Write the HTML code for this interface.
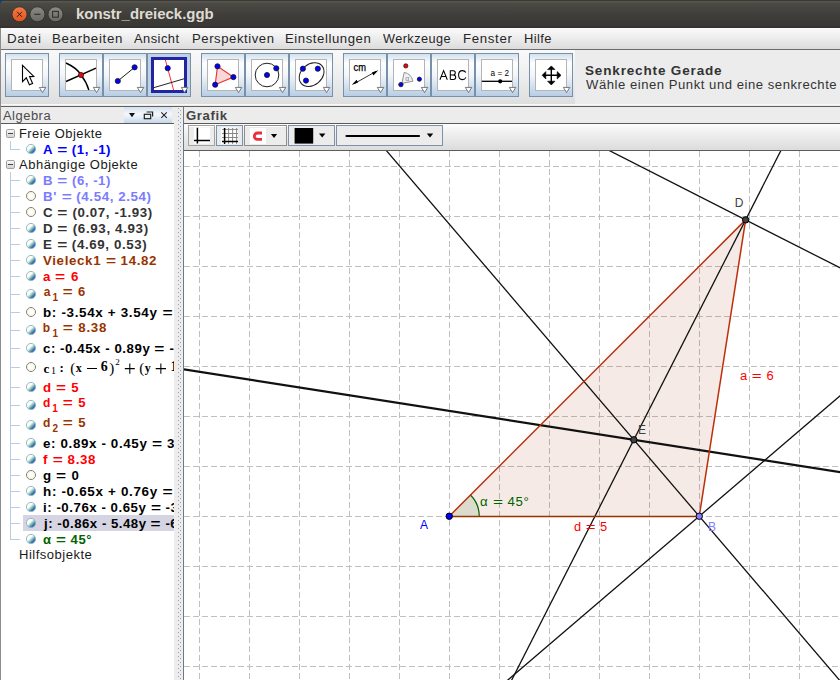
<!DOCTYPE html>
<html><head><meta charset="utf-8">
<style>
*{margin:0;padding:0;box-sizing:border-box}
html,body{width:840px;height:680px;overflow:hidden;background:#ececec;font-family:"Liberation Sans",sans-serif}
.a{position:absolute}
.t{position:absolute;white-space:nowrap;line-height:1}
</style></head><body>
<div class="a" style="left:0;top:0;width:12px;height:12px;background:#1b3868"></div>
<div class="a" style="left:0;top:0;width:840px;height:28px;background:linear-gradient(#3a3935 0,#3a3935 1px,#57564f 1px,#57564f 2px,#4b4a45 3px,#3d3c38 60%,#393834);border-radius:5px 0 0 0"></div>
<div class="a" style="left:0;top:26px;width:840px;height:2px;background:#34332f"></div>
<svg class="a" style="left:0;top:0" width="70" height="28">
<defs>
<linearGradient id="gc" x1="0" y1="0" x2="0" y2="1"><stop offset="0" stop-color="#f27a4a"/><stop offset="1" stop-color="#e2541c"/></linearGradient>
<linearGradient id="gg" x1="0" y1="0" x2="0" y2="1"><stop offset="0" stop-color="#8c8a85"/><stop offset="1" stop-color="#6a6863"/></linearGradient>
</defs>
<circle cx="19.5" cy="14.3" r="7.5" fill="url(#gc)" stroke="#2e2d29" stroke-width="0.8"/>
<path d="M17 11.8 L22 16.8 M22 11.8 L17 16.8" stroke="#3a1a0c" stroke-width="1"/>
<circle cx="37.4" cy="14.3" r="7.5" fill="url(#gg)" stroke="#2e2d29" stroke-width="0.8"/>
<path d="M34.3 14.3 H40.5" stroke="#33322e" stroke-width="1.2"/>
<circle cx="55.5" cy="14.3" r="7.5" fill="url(#gg)" stroke="#2e2d29" stroke-width="0.8"/>
<rect x="52.6" y="11.4" width="5.8" height="5.8" fill="none" stroke="#33322e" stroke-width="1.1"/>
</svg>
<div class="t" style="left:75.80px;top:6.05px;font-size:15px;font-weight:bold;color:#dfdbd2;letter-spacing:-0.021px;font-family:'Liberation Sans',sans-serif;transform:scaleX(0.9974);transform-origin:0 0;">konstr_dreieck.ggb</div>
<div class="a" style="left:0;top:28px;width:840px;height:21px;background:linear-gradient(#fbfbfb,#e9e9e9 60%,#dcdcdc)"></div>
<div class="a" style="left:0;top:49px;width:840px;height:1px;background:#6d6d6d"></div>
<div class="t" style="left:7.49px;top:32.84px;font-size:12px;font-weight:normal;color:#262626;letter-spacing:0.643px;font-family:'Liberation Sans',sans-serif;transform:scaleX(1.1088);transform-origin:0 0;">Datei</div>
<div class="t" style="left:52.19px;top:32.84px;font-size:12px;font-weight:normal;color:#262626;letter-spacing:0.607px;font-family:'Liberation Sans',sans-serif;transform:scaleX(1.1075);transform-origin:0 0;">Bearbeiten</div>
<div class="t" style="left:134.30px;top:32.84px;font-size:12px;font-weight:normal;color:#262626;letter-spacing:0.443px;font-family:'Liberation Sans',sans-serif;transform:scaleX(1.0725);transform-origin:0 0;">Ansicht</div>
<div class="t" style="left:192.21px;top:32.84px;font-size:12px;font-weight:normal;color:#262626;letter-spacing:0.516px;font-family:'Liberation Sans',sans-serif;transform:scaleX(1.0917);transform-origin:0 0;">Perspektiven</div>
<div class="t" style="left:285.10px;top:32.84px;font-size:12px;font-weight:normal;color:#262626;letter-spacing:0.517px;font-family:'Liberation Sans',sans-serif;transform:scaleX(1.0967);transform-origin:0 0;">Einstellungen</div>
<div class="t" style="left:383.20px;top:32.84px;font-size:12px;font-weight:normal;color:#262626;letter-spacing:0.413px;font-family:'Liberation Sans',sans-serif;transform:scaleX(1.0583);transform-origin:0 0;">Werkzeuge</div>
<div class="t" style="left:462.90px;top:32.84px;font-size:12px;font-weight:normal;color:#262626;letter-spacing:0.612px;font-family:'Liberation Sans',sans-serif;transform:scaleX(1.1025);transform-origin:0 0;">Fenster</div>
<div class="t" style="left:524.32px;top:32.84px;font-size:12px;font-weight:normal;color:#262626;letter-spacing:0.395px;font-family:'Liberation Sans',sans-serif;transform:scaleX(1.0756);transform-origin:0 0;">Hilfe</div>
<div class="a" style="left:0;top:50px;width:840px;height:56px;background:#ececec"></div>
<div class="a" style="left:1px;top:50px;width:574px;height:54px;background:linear-gradient(#f9f9f9,#f3f3f3 30%,#dedede)"></div>
<div class="a" style="left:0;top:104px;width:840px;height:1px;background:#f8f8f8"></div>
<div class="a" style="left:0;top:106px;width:840px;height:1px;background:#606060"></div>
<svg class="a" style="left:0;top:53px" width="580" height="44"><defs><linearGradient id="bg" x1="0" y1="0" x2="0" y2="1">
<stop offset="0" stop-color="#cfdeec"/><stop offset="0.22" stop-color="#fdfeff"/><stop offset="0.5" stop-color="#f2f6fa"/><stop offset="1" stop-color="#b6cde4"/></linearGradient></defs><g transform="translate(5,0)"><rect x="0.5" y="0.5" width="43" height="43" fill="url(#bg)" stroke="#7890a8" stroke-width="1"/><rect x="6.5" y="6.5" width="31" height="31" fill="#fff" stroke="#b4b4b4" stroke-width="1"/><path d="M17.5 12.3 L17.5 28.6 L21.3 24.8 L24.4 31.8 L27.6 30.5 L24.6 23.6 L28.8 23.4 Z" fill="#fff" stroke="#000" stroke-width="1.1" stroke-linejoin="miter"/><path d="M34.3 34.4 L40.8 34.4 L37.55 39.6 Z" fill="#fff" stroke="#6a6a6a" stroke-width="0.9" stroke-linejoin="miter"/></g><g transform="translate(59,0)"><rect x="0.5" y="0.5" width="43" height="43" fill="url(#bg)" stroke="#7890a8" stroke-width="1"/><rect x="6.5" y="6.5" width="31" height="31" fill="#fff" stroke="#b4b4b4" stroke-width="1"/><path d="M7 10 Q18 15 22 22 Q27.5 29 29.8 37" fill="none" stroke="#000" stroke-width="1.4"/><path d="M7 28.5 L37 15.2" fill="none" stroke="#000" stroke-width="1.4"/><circle cx="22" cy="22" r="2.6" fill="#ff0000" stroke="#1a1a1a" stroke-width="0.8"/><path d="M34.3 34.4 L40.8 34.4 L37.55 39.6 Z" fill="#fff" stroke="#6a6a6a" stroke-width="0.9" stroke-linejoin="miter"/></g><g transform="translate(103,0)"><rect x="0.5" y="0.5" width="43" height="43" fill="url(#bg)" stroke="#7890a8" stroke-width="1"/><rect x="6.5" y="6.5" width="31" height="31" fill="#fff" stroke="#b4b4b4" stroke-width="1"/><path d="M14.8 28 L31.6 14.3" stroke="#000" stroke-width="0.9"/><circle cx="14.8" cy="28" r="2.6" fill="#0000ff" stroke="#1a1a1a" stroke-width="0.8"/><circle cx="31.6" cy="14.3" r="2.6" fill="#0000ff" stroke="#1a1a1a" stroke-width="0.8"/><path d="M34.3 34.4 L40.8 34.4 L37.55 39.6 Z" fill="#fff" stroke="#6a6a6a" stroke-width="0.9" stroke-linejoin="miter"/></g><g transform="translate(147,0)"><rect x="0.5" y="0.5" width="43" height="43" fill="#bcd3e9" stroke="#7f8fa0" stroke-width="1"/><rect x="5.5" y="5.5" width="33" height="33" fill="#fff" stroke="#2424a0" stroke-width="3"/><path d="M18.4 7 L26.6 37" stroke="#ff3030" stroke-width="1"/><path d="M7 34.6 L37 25.8" stroke="#222" stroke-width="1"/><circle cx="20.7" cy="15.2" r="2.6" fill="#0000ff" stroke="#1a1a1a" stroke-width="0.8"/><path d="M34.3 34.4 L40.8 34.4 L37.55 39.6 Z" fill="#fff" stroke="#6a6a6a" stroke-width="0.9" stroke-linejoin="miter"/></g><g transform="translate(201,0)"><rect x="0.5" y="0.5" width="43" height="43" fill="url(#bg)" stroke="#7890a8" stroke-width="1"/><rect x="6.5" y="6.5" width="31" height="31" fill="#fff" stroke="#b4b4b4" stroke-width="1"/><path d="M16.5 13.3 L32.4 24.1 L14.2 31.7 Z" fill="#f8d8d8" stroke="#e83030" stroke-width="1.1"/><circle cx="16.5" cy="13.3" r="2.6" fill="#0000ff" stroke="#1a1a1a" stroke-width="0.8"/><circle cx="32.4" cy="24.1" r="2.6" fill="#0000ff" stroke="#1a1a1a" stroke-width="0.8"/><circle cx="14.2" cy="31.7" r="2.6" fill="#0000ff" stroke="#1a1a1a" stroke-width="0.8"/><path d="M34.3 34.4 L40.8 34.4 L37.55 39.6 Z" fill="#fff" stroke="#6a6a6a" stroke-width="0.9" stroke-linejoin="miter"/></g><g transform="translate(245,0)"><rect x="0.5" y="0.5" width="43" height="43" fill="url(#bg)" stroke="#7890a8" stroke-width="1"/><rect x="6.5" y="6.5" width="31" height="31" fill="#fff" stroke="#b4b4b4" stroke-width="1"/><circle cx="22" cy="22" r="11.8" fill="none" stroke="#222" stroke-width="1"/><circle cx="22" cy="22" r="2.6" fill="#0000ff" stroke="#1a1a1a" stroke-width="0.8"/><circle cx="31.3" cy="15.3" r="2.6" fill="#0000ff" stroke="#1a1a1a" stroke-width="0.8"/><path d="M34.3 34.4 L40.8 34.4 L37.55 39.6 Z" fill="#fff" stroke="#6a6a6a" stroke-width="0.9" stroke-linejoin="miter"/></g><g transform="translate(289,0)"><rect x="0.5" y="0.5" width="43" height="43" fill="url(#bg)" stroke="#7890a8" stroke-width="1"/><rect x="6.5" y="6.5" width="31" height="31" fill="#fff" stroke="#b4b4b4" stroke-width="1"/><ellipse cx="22.6" cy="21.6" rx="13.6" ry="10.4" transform="rotate(-40 22.6 21.6)" fill="none" stroke="#222" stroke-width="1"/><circle cx="13.9" cy="15.7" r="2.6" fill="#0000ff" stroke="#1a1a1a" stroke-width="0.8"/><circle cx="28.8" cy="15.7" r="2.6" fill="#0000ff" stroke="#1a1a1a" stroke-width="0.8"/><circle cx="17" cy="27.6" r="2.6" fill="#0000ff" stroke="#1a1a1a" stroke-width="0.8"/><path d="M34.3 34.4 L40.8 34.4 L37.55 39.6 Z" fill="#fff" stroke="#6a6a6a" stroke-width="0.9" stroke-linejoin="miter"/></g><g transform="translate(343,0)"><rect x="0.5" y="0.5" width="43" height="43" fill="url(#bg)" stroke="#7890a8" stroke-width="1"/><rect x="6.5" y="6.5" width="31" height="31" fill="#fff" stroke="#b4b4b4" stroke-width="1"/><text x="10.6" y="17.9" font-family="Liberation Sans" font-size="10" fill="#000" stroke="#000" stroke-width="0.25" textLength="12.4" lengthAdjust="spacingAndGlyphs">cm</text><path d="M11 30.8 L33 18.4" stroke="#000" stroke-width="0.8"/><path d="M8.7 32 L13.6 26.8 L15.1 29.6 Z M35.3 17.2 L30.4 22.4 L28.9 19.6 Z" fill="#000"/><path d="M34.3 34.4 L40.8 34.4 L37.55 39.6 Z" fill="#fff" stroke="#6a6a6a" stroke-width="0.9" stroke-linejoin="miter"/></g><g transform="translate(387,0)"><rect x="0.5" y="0.5" width="43" height="43" fill="url(#bg)" stroke="#7890a8" stroke-width="1"/><rect x="6.5" y="6.5" width="31" height="31" fill="#fff" stroke="#b4b4b4" stroke-width="1"/><path d="M14.9 30.4 L17.2 19.4 A11 11 0 0 1 25.9 28.2 Z" fill="#f0f0f0" stroke="#888" stroke-width="0.9"/><text x="18.2" y="27.6" font-family="Liberation Sans" font-size="7" fill="#888">α</text><circle cx="18.8" cy="12.9" r="2.1" fill="#ff0000" stroke="#1a1a1a" stroke-width="0.8"/><circle cx="13.9" cy="31.6" r="2.2" fill="#0000ff" stroke="#1a1a1a" stroke-width="0.8"/><circle cx="32.4" cy="26.2" r="2.1" fill="#0000ff" stroke="#1a1a1a" stroke-width="0.8"/><path d="M34.3 34.4 L40.8 34.4 L37.55 39.6 Z" fill="#fff" stroke="#6a6a6a" stroke-width="0.9" stroke-linejoin="miter"/></g><g transform="translate(431,0)"><rect x="0.5" y="0.5" width="43" height="43" fill="url(#bg)" stroke="#7890a8" stroke-width="1"/><rect x="6.5" y="6.5" width="31" height="31" fill="#fff" stroke="#b4b4b4" stroke-width="1"/><path d="M8.9 26.7 L12.6 17.6 L16.3 26.7 M10.3 23.4 H14.9" fill="none" stroke="#000" stroke-width="1.05"/><path d="M19.3 26.4 V17.7 H22.4 Q24.3 17.7 24.3 19.8 Q24.3 21.9 22.2 21.9 H19.3 M22.2 21.9 Q24.7 21.9 24.7 24.2 Q24.7 26.4 22.4 26.4 H19.3" fill="none" stroke="#000" stroke-width="1.05"/><path d="M34.8 19.6 Q33.8 17.6 31.4 17.6 Q27.6 17.6 27.6 22.1 Q27.6 26.6 31.4 26.6 Q33.9 26.6 34.9 24.4" fill="none" stroke="#000" stroke-width="1.05"/><path d="M34.3 34.4 L40.8 34.4 L37.55 39.6 Z" fill="#fff" stroke="#6a6a6a" stroke-width="0.9" stroke-linejoin="miter"/></g><g transform="translate(475,0)"><rect x="0.5" y="0.5" width="43" height="43" fill="url(#bg)" stroke="#7890a8" stroke-width="1"/><rect x="6.5" y="6.5" width="31" height="31" fill="#fff" stroke="#b4b4b4" stroke-width="1"/><text x="15.6" y="22.7" font-family="Liberation Sans" font-size="8.5" fill="#000" textLength="18.4" lengthAdjust="spacingAndGlyphs">a = 2</text><path d="M6.8 28.3 H37" stroke="#000" stroke-width="1.3"/><circle cx="25.2" cy="28.3" r="2.1" fill="#000"/><path d="M34.3 34.4 L40.8 34.4 L37.55 39.6 Z" fill="#fff" stroke="#6a6a6a" stroke-width="0.9" stroke-linejoin="miter"/></g><g transform="translate(529,0)"><rect x="0.5" y="0.5" width="43" height="43" fill="url(#bg)" stroke="#7890a8" stroke-width="1"/><rect x="6.5" y="6.5" width="31" height="31" fill="#fff" stroke="#b4b4b4" stroke-width="1"/><path d="M22.3 15 V29.6 M15.6 22.3 H29" stroke="#000" stroke-width="1.4"/><path d="M22.3 12.9 L26 16.6 L18.6 16.6 Z M22.3 32 L26 28.2 L18.6 28.2 Z M13.1 22.3 L16.8 18.6 L16.8 26 Z M32 22.3 L28.2 18.6 L28.2 26 Z" fill="#000" stroke="#000" stroke-width="0.6" stroke-linejoin="miter"/><path d="M34.3 34.4 L40.8 34.4 L37.55 39.6 Z" fill="#fff" stroke="#6a6a6a" stroke-width="0.9" stroke-linejoin="miter"/></g></svg>
<div class="t" style="left:585.26px;top:64.64px;font-size:12px;font-weight:bold;color:#333;letter-spacing:0.753px;font-family:'Liberation Sans',sans-serif;transform:scaleX(1.1247);transform-origin:0 0;">Senkrechte Gerade</div>
<div class="t" style="left:585.60px;top:79.44px;font-size:12px;font-weight:normal;color:#333;letter-spacing:0.489px;font-family:'Liberation Sans',sans-serif;transform:scaleX(1.0907);transform-origin:0 0;">Wähle einen Punkt und eine senkrechte Gerade</div>
<div class="a" style="left:0;top:28px;width:1px;height:652px;background:#8c8c8c"></div>
<div class="a" style="left:1px;top:107px;width:173px;height:16px;background:#ececec"></div>
<div class="a" style="left:124px;top:107px;width:48px;height:16px;background:linear-gradient(#d3e0ee,#f4f8fb 45%,#e9f0f7 60%,#c3d6ea)"></div>
<div class="a" style="left:1px;top:123px;width:173px;height:1px;background:#5a5a5a"></div>
<svg class="a" style="left:124px;top:107px" width="48" height="16">
<path d="M5 6 H11 L8 10.2 Z" fill="#111"/>
<rect x="20.3" y="7.3" width="6.4" height="4.4" fill="none" stroke="#222" stroke-width="1.2"/>
<path d="M22.6 5 H28.6 V9.6" fill="none" stroke="#222" stroke-width="1.2"/>
<path d="M37.3 5.3 L42.8 10.8 M42.8 5.3 L37.3 10.8" stroke="#222" stroke-width="1.1"/>
</svg>
<div class="t" style="left:3.00px;top:109.84px;font-size:12px;font-weight:normal;color:#4a4a4a;letter-spacing:0.481px;font-family:'Liberation Sans',sans-serif;transform:scaleX(1.0749);transform-origin:0 0;">Algebra</div>
<div class="a" style="left:1px;top:124px;width:173px;height:556px;background:#fff;overflow:hidden"><div class="a" style="left:-1px;top:-124px;width:840px;height:680px"><svg class="a" style="left:0;top:124px" width="174" height="556"><defs><linearGradient id="mg" x1="0" y1="0" x2="0" y2="1"><stop offset="0" stop-color="#fafafa"/><stop offset="1" stop-color="#d0d0d0"/></linearGradient><linearGradient id="ball" x1="0.15" y1="0.15" x2="0.85" y2="0.85"><stop offset="0" stop-color="#ffffff"/><stop offset="0.36" stop-color="#fbfdf6"/><stop offset="0.46" stop-color="#cfe6c4"/><stop offset="0.6" stop-color="#94bcc0"/><stop offset="0.75" stop-color="#4a8cbf"/><stop offset="1" stop-color="#23508a"/></linearGradient></defs><rect x="10" y="17" width="1" height="8" fill="#b8cce4"/><rect x="10" y="25" width="10" height="1" fill="#b8cce4"/><rect x="6.5" y="5.5" width="8" height="8" rx="1.2" fill="url(#mg)" stroke="#a0a0a0" stroke-width="1"/><rect x="8" y="9" width="5" height="1" fill="#444"/><rect x="6.5" y="36.5" width="8" height="8" rx="1.2" fill="url(#mg)" stroke="#a0a0a0" stroke-width="1"/><rect x="8" y="40" width="5" height="1" fill="#444"/><rect x="23" y="391" width="151" height="16" fill="#d4d4e2"/><rect x="10" y="48" width="1" height="367" fill="#b8cce4"/><circle cx="31" cy="25" r="4.6" fill="url(#ball)" stroke="#86b2c8" stroke-width="0.9"/><rect x="10" y="56" width="10" height="1" fill="#b8cce4"/><circle cx="31" cy="56" r="4.6" fill="url(#ball)" stroke="#86b2c8" stroke-width="0.9"/><rect x="10" y="72" width="10" height="1" fill="#b8cce4"/><circle cx="31" cy="72" r="4.5" fill="#fff" stroke="#7c7c7c" stroke-width="1"/><circle cx="31" cy="72" r="3.5" fill="none" stroke="#f2f2cc" stroke-width="1"/><rect x="10" y="88" width="10" height="1" fill="#b8cce4"/><circle cx="31" cy="88" r="4.5" fill="#fff" stroke="#7c7c7c" stroke-width="1"/><circle cx="31" cy="88" r="3.5" fill="none" stroke="#f2f2cc" stroke-width="1"/><rect x="10" y="104" width="10" height="1" fill="#b8cce4"/><circle cx="31" cy="104" r="4.6" fill="url(#ball)" stroke="#86b2c8" stroke-width="0.9"/><rect x="10" y="120" width="10" height="1" fill="#b8cce4"/><circle cx="31" cy="120" r="4.6" fill="url(#ball)" stroke="#86b2c8" stroke-width="0.9"/><rect x="10" y="136" width="10" height="1" fill="#b8cce4"/><circle cx="31" cy="136" r="4.6" fill="url(#ball)" stroke="#86b2c8" stroke-width="0.9"/><rect x="10" y="152" width="10" height="1" fill="#b8cce4"/><circle cx="31" cy="152" r="4.6" fill="url(#ball)" stroke="#86b2c8" stroke-width="0.9"/><rect x="10" y="170" width="10" height="1" fill="#b8cce4"/><circle cx="31" cy="170" r="4.6" fill="url(#ball)" stroke="#86b2c8" stroke-width="0.9"/><rect x="10" y="188" width="10" height="1" fill="#b8cce4"/><circle cx="31" cy="188" r="4.5" fill="#fff" stroke="#7c7c7c" stroke-width="1"/><circle cx="31" cy="188" r="3.5" fill="none" stroke="#f2f2cc" stroke-width="1"/><rect x="10" y="206" width="10" height="1" fill="#b8cce4"/><circle cx="31" cy="206" r="4.6" fill="url(#ball)" stroke="#86b2c8" stroke-width="0.9"/><rect x="10" y="224" width="10" height="1" fill="#b8cce4"/><circle cx="31" cy="224" r="4.6" fill="url(#ball)" stroke="#86b2c8" stroke-width="0.9"/><rect x="10" y="243" width="10" height="1" fill="#b8cce4"/><circle cx="31" cy="243" r="4.5" fill="#fff" stroke="#7c7c7c" stroke-width="1"/><circle cx="31" cy="243" r="3.5" fill="none" stroke="#f2f2cc" stroke-width="1"/><rect x="10" y="263" width="10" height="1" fill="#b8cce4"/><circle cx="31" cy="263" r="4.6" fill="url(#ball)" stroke="#86b2c8" stroke-width="0.9"/><rect x="10" y="281" width="10" height="1" fill="#b8cce4"/><circle cx="31" cy="281" r="4.6" fill="url(#ball)" stroke="#86b2c8" stroke-width="0.9"/><rect x="10" y="301" width="10" height="1" fill="#b8cce4"/><circle cx="31" cy="301" r="4.6" fill="url(#ball)" stroke="#86b2c8" stroke-width="0.9"/><rect x="10" y="319" width="10" height="1" fill="#b8cce4"/><circle cx="31" cy="319" r="4.6" fill="url(#ball)" stroke="#86b2c8" stroke-width="0.9"/><rect x="10" y="335" width="10" height="1" fill="#b8cce4"/><circle cx="31" cy="335" r="4.6" fill="url(#ball)" stroke="#86b2c8" stroke-width="0.9"/><rect x="10" y="351" width="10" height="1" fill="#b8cce4"/><circle cx="31" cy="351" r="4.5" fill="#fff" stroke="#7c7c7c" stroke-width="1"/><circle cx="31" cy="351" r="3.5" fill="none" stroke="#f2f2cc" stroke-width="1"/><rect x="10" y="367" width="10" height="1" fill="#b8cce4"/><circle cx="31" cy="367" r="4.6" fill="url(#ball)" stroke="#86b2c8" stroke-width="0.9"/><rect x="10" y="383" width="10" height="1" fill="#b8cce4"/><circle cx="31" cy="383" r="4.6" fill="url(#ball)" stroke="#86b2c8" stroke-width="0.9"/><rect x="10" y="399" width="10" height="1" fill="#b8cce4"/><circle cx="31" cy="399" r="4.6" fill="url(#ball)" stroke="#86b2c8" stroke-width="0.9"/><rect x="10" y="415" width="10" height="1" fill="#b8cce4"/><circle cx="31" cy="415" r="4.6" fill="url(#ball)" stroke="#86b2c8" stroke-width="0.9"/></svg><div class="t" style="left:18.62px;top:127.84px;font-size:12px;font-weight:normal;color:#1a1a1a;letter-spacing:0.422px;font-family:'Liberation Sans',sans-serif;transform:scaleX(1.0772);transform-origin:0 0;">Freie Objekte</div><div class="t" style="left:19.30px;top:158.84px;font-size:12px;font-weight:normal;color:#1a1a1a;letter-spacing:0.477px;font-family:'Liberation Sans',sans-serif;transform:scaleX(1.0812);transform-origin:0 0;">Abhängige Objekte</div><div class="t" style="left:18.91px;top:548.84px;font-size:12px;font-weight:normal;color:#1a1a1a;letter-spacing:0.443px;font-family:'Liberation Sans',sans-serif;transform:scaleX(1.0875);transform-origin:0 0;">Hilfsobjekte</div><div class="t" style="left:43.17px;top:143.84px;font-size:12px;font-weight:bold;color:#0000ff;letter-spacing:0.517px;font-family:'Liberation Sans',sans-serif;transform:scaleX(1.1034);transform-origin:0 0;">A <span style="display:inline-block;transform:scaleX(1.3);margin:0 1.05px">=</span> (1, -1)</div><div class="t" style="left:42.62px;top:174.84px;font-size:12px;font-weight:bold;color:#7b7bff;letter-spacing:0.488px;font-family:'Liberation Sans',sans-serif;transform:scaleX(1.0971);transform-origin:0 0;">B <span style="display:inline-block;transform:scaleX(1.3);margin:0 1.05px">=</span> (6, -1)</div><div class="t" style="left:42.61px;top:190.84px;font-size:12px;font-weight:bold;color:#7b7bff;letter-spacing:0.541px;font-family:'Liberation Sans',sans-serif;transform:scaleX(1.1100);transform-origin:0 0;">B' <span style="display:inline-block;transform:scaleX(1.3);margin:0 1.05px">=</span> (4.54, 2.54)</div><div class="t" style="left:42.95px;top:206.84px;font-size:12px;font-weight:bold;color:#333333;letter-spacing:0.544px;font-family:'Liberation Sans',sans-serif;transform:scaleX(1.1088);transform-origin:0 0;">C <span style="display:inline-block;transform:scaleX(1.3);margin:0 1.05px">=</span> (0.07, -1.93)</div><div class="t" style="left:42.61px;top:222.84px;font-size:12px;font-weight:bold;color:#333333;letter-spacing:0.572px;font-family:'Liberation Sans',sans-serif;transform:scaleX(1.1132);transform-origin:0 0;">D <span style="display:inline-block;transform:scaleX(1.3);margin:0 1.05px">=</span> (6.93, 4.93)</div><div class="t" style="left:42.61px;top:238.84px;font-size:12px;font-weight:bold;color:#333333;letter-spacing:0.553px;font-family:'Liberation Sans',sans-serif;transform:scaleX(1.1098);transform-origin:0 0;">E <span style="display:inline-block;transform:scaleX(1.3);margin:0 1.05px">=</span> (4.69, 0.53)</div><div class="t" style="left:43.39px;top:254.84px;font-size:12px;font-weight:bold;color:#993300;letter-spacing:0.597px;font-family:'Liberation Sans',sans-serif;transform:scaleX(1.1063);transform-origin:0 0;">Vieleck1 <span style="display:inline-block;transform:scaleX(1.3);margin:0 1.05px">=</span> 14.82</div><div class="t" style="left:43.17px;top:270.84px;font-size:12px;font-weight:bold;color:#ff0000;letter-spacing:0.699px;font-family:'Liberation Sans',sans-serif;transform:scaleX(1.1088);transform-origin:0 0;">a <span style="display:inline-block;transform:scaleX(1.3);margin:0 1.05px">=</span> 6</div><div class="t" style="left:43.80px;top:285.84px;font-size:12px;font-weight:bold;color:#993300;letter-spacing:0.000px;font-family:'Liberation Sans',sans-serif;">a</div><div class="t" style="left:52.40px;top:292.54px;font-size:10px;font-weight:bold;color:#993300;letter-spacing:0.000px;font-family:'Liberation Sans',sans-serif;">1</div><div class="t" style="left:63.06px;top:285.84px;font-size:12px;font-weight:bold;color:#993300;letter-spacing:0.693px;font-family:'Liberation Sans',sans-serif;transform:scaleX(1.0824);transform-origin:0 0;"><span style="display:inline-block;transform:scaleX(1.3);margin:0 1.05px">=</span> 6</div><div class="t" style="left:42.61px;top:306.84px;font-size:12px;font-weight:bold;color:#000;letter-spacing:0.598px;font-family:'Liberation Sans',sans-serif;transform:scaleX(1.1174);transform-origin:0 0;">b: -3.54x + 3.54y <span style="display:inline-block;transform:scaleX(1.3);margin:0 1.05px">=</span> -3.54</div><div class="t" style="left:42.70px;top:321.84px;font-size:12px;font-weight:bold;color:#993300;letter-spacing:0.000px;font-family:'Liberation Sans',sans-serif;">b</div><div class="t" style="left:52.50px;top:328.54px;font-size:10px;font-weight:bold;color:#993300;letter-spacing:0.000px;font-family:'Liberation Sans',sans-serif;">1</div><div class="t" style="left:63.05px;top:321.84px;font-size:12px;font-weight:bold;color:#993300;letter-spacing:0.677px;font-family:'Liberation Sans',sans-serif;transform:scaleX(1.1074);transform-origin:0 0;"><span style="display:inline-block;transform:scaleX(1.3);margin:0 1.05px">=</span> 8.38</div><div class="t" style="left:43.06px;top:342.84px;font-size:12px;font-weight:bold;color:#000;letter-spacing:0.503px;font-family:'Liberation Sans',sans-serif;transform:scaleX(1.1032);transform-origin:0 0;">c: -0.45x - 0.89y <span style="display:inline-block;transform:scaleX(1.3);margin:0 1.05px">=</span> -7.5</div><div class="t" style="left:42.95px;top:381.84px;font-size:12px;font-weight:bold;color:#ff0000;letter-spacing:0.649px;font-family:'Liberation Sans',sans-serif;transform:scaleX(1.0983);transform-origin:0 0;">d <span style="display:inline-block;transform:scaleX(1.3);margin:0 1.05px">=</span> 5</div><div class="t" style="left:43.00px;top:396.84px;font-size:12px;font-weight:bold;color:#ff0000;letter-spacing:0.000px;font-family:'Liberation Sans',sans-serif;">d</div><div class="t" style="left:52.20px;top:403.54px;font-size:10px;font-weight:bold;color:#ff0000;letter-spacing:0.000px;font-family:'Liberation Sans',sans-serif;">1</div><div class="t" style="left:63.05px;top:396.84px;font-size:12px;font-weight:bold;color:#ff0000;letter-spacing:0.778px;font-family:'Liberation Sans',sans-serif;transform:scaleX(1.0929);transform-origin:0 0;"><span style="display:inline-block;transform:scaleX(1.3);margin:0 1.05px">=</span> 5</div><div class="t" style="left:43.00px;top:416.84px;font-size:12px;font-weight:bold;color:#993300;letter-spacing:0.000px;font-family:'Liberation Sans',sans-serif;">d</div><div class="t" style="left:52.50px;top:423.54px;font-size:10px;font-weight:bold;color:#993300;letter-spacing:0.000px;font-family:'Liberation Sans',sans-serif;">2</div><div class="t" style="left:63.05px;top:416.84px;font-size:12px;font-weight:bold;color:#993300;letter-spacing:0.778px;font-family:'Liberation Sans',sans-serif;transform:scaleX(1.0929);transform-origin:0 0;"><span style="display:inline-block;transform:scaleX(1.3);margin:0 1.05px">=</span> 5</div><div class="t" style="left:43.05px;top:437.84px;font-size:12px;font-weight:bold;color:#000;letter-spacing:0.569px;font-family:'Liberation Sans',sans-serif;transform:scaleX(1.1131);transform-origin:0 0;">e: 0.89x - 0.45y <span style="display:inline-block;transform:scaleX(1.3);margin:0 1.05px">=</span> 3.94</div><div class="t" style="left:43.28px;top:453.84px;font-size:12px;font-weight:bold;color:#ff0000;letter-spacing:0.599px;font-family:'Liberation Sans',sans-serif;transform:scaleX(1.1092);transform-origin:0 0;">f <span style="display:inline-block;transform:scaleX(1.3);margin:0 1.05px">=</span> 8.38</div><div class="t" style="left:42.95px;top:469.84px;font-size:12px;font-weight:bold;color:#000;letter-spacing:0.669px;font-family:'Liberation Sans',sans-serif;transform:scaleX(1.1024);transform-origin:0 0;">g <span style="display:inline-block;transform:scaleX(1.3);margin:0 1.05px">=</span> 0</div><div class="t" style="left:42.60px;top:485.84px;font-size:12px;font-weight:bold;color:#000;letter-spacing:0.605px;font-family:'Liberation Sans',sans-serif;transform:scaleX(1.1188);transform-origin:0 0;">h: -0.65x + 0.76y <span style="display:inline-block;transform:scaleX(1.3);margin:0 1.05px">=</span> -4.66</div><div class="t" style="left:42.62px;top:501.84px;font-size:12px;font-weight:bold;color:#000;letter-spacing:0.489px;font-family:'Liberation Sans',sans-serif;transform:scaleX(1.1039);transform-origin:0 0;">i: -0.76x - 0.65y <span style="display:inline-block;transform:scaleX(1.3);margin:0 1.05px">=</span> -3.91</div><div class="t" style="left:43.72px;top:517.84px;font-size:12px;font-weight:bold;color:#000;letter-spacing:0.469px;font-family:'Liberation Sans',sans-serif;transform:scaleX(1.0982);transform-origin:0 0;">j: -0.86x - 5.48y <span style="display:inline-block;transform:scaleX(1.3);margin:0 1.05px">=</span> -6.94</div><div class="t" style="left:43.06px;top:533.84px;font-size:12px;font-weight:bold;color:#006400;letter-spacing:0.544px;font-family:'Liberation Sans',sans-serif;transform:scaleX(1.0879);transform-origin:0 0;">α <span style="display:inline-block;transform:scaleX(1.3);margin:0 1.05px">=</span> 45°</div><div class="t" style="left:43.40px;top:361.84px;font-size:12px;font-weight:bold;color:#000;letter-spacing:0.000px;font-family:'Liberation Serif',serif;font-size:13px">c</div><div class="t" style="left:51.10px;top:365.54px;font-size:10px;font-weight:normal;color:#000;letter-spacing:0.000px;font-family:'Liberation Serif',serif;">1</div><div class="t" style="left:59.40px;top:361.00px;font-size:13px;font-weight:bold;color:#000;letter-spacing:0.000px;font-family:'Liberation Serif',serif;">:</div><div class="t" style="left:70.20px;top:360.80px;font-size:15px;font-weight:normal;color:#000;letter-spacing:0.000px;font-family:'Liberation Serif',serif;">(</div><div class="t" style="left:75.80px;top:361.84px;font-size:12px;font-weight:bold;color:#000;letter-spacing:0.000px;font-family:'Liberation Serif',serif;">x</div><div class="t" style="left:100.75px;top:360.15px;font-size:14px;font-weight:bold;color:#000;letter-spacing:0.000px;font-family:'Liberation Serif',serif;">6</div><div class="t" style="left:109.30px;top:360.80px;font-size:15px;font-weight:normal;color:#000;letter-spacing:0.000px;font-family:'Liberation Serif',serif;">)</div><div class="t" style="left:115.30px;top:358.38px;font-size:9px;font-weight:normal;color:#000;letter-spacing:0.000px;font-family:'Liberation Serif',serif;">2</div><div class="t" style="left:139.20px;top:360.80px;font-size:15px;font-weight:normal;color:#000;letter-spacing:0.000px;font-family:'Liberation Serif',serif;">(</div><div class="t" style="left:144.70px;top:361.84px;font-size:12px;font-weight:bold;color:#000;letter-spacing:0.000px;font-family:'Liberation Serif',serif;">y</div><div class="t" style="left:170.40px;top:360.15px;font-size:14px;font-weight:bold;color:#000;letter-spacing:0.000px;font-family:'Liberation Serif',serif;">1</div><svg class="a" style="left:0;top:0" width="180" height="380"><path d="M87 368.5 H97 M124.8 368.6 H134.8 M129.8 363.4 V373.8 M155.7 368.6 H166 M160.85 363.4 V373.8" stroke="#000" stroke-width="1.05"/></svg></div></div>
<div class="a" style="left:174px;top:107px;width:9px;height:573px;background:#ececec"></div>
<svg class="a" style="left:174px;top:0" width="9" height="680"><rect x="4" y="108" width="1" height="1" fill="#9aa4b4"/><rect x="6" y="110" width="1" height="1" fill="#9aa4b4"/><rect x="4" y="112" width="1" height="1" fill="#9aa4b4"/><rect x="6" y="114" width="1" height="1" fill="#9aa4b4"/><rect x="4" y="116" width="1" height="1" fill="#9aa4b4"/><rect x="6" y="118" width="1" height="1" fill="#9aa4b4"/><rect x="4" y="120" width="1" height="1" fill="#9aa4b4"/><rect x="6" y="122" width="1" height="1" fill="#9aa4b4"/><rect x="4" y="124" width="1" height="1" fill="#9aa4b4"/><rect x="6" y="126" width="1" height="1" fill="#9aa4b4"/><rect x="4" y="128" width="1" height="1" fill="#9aa4b4"/><rect x="6" y="130" width="1" height="1" fill="#9aa4b4"/><rect x="4" y="132" width="1" height="1" fill="#9aa4b4"/><rect x="6" y="134" width="1" height="1" fill="#9aa4b4"/><rect x="4" y="136" width="1" height="1" fill="#9aa4b4"/><rect x="6" y="138" width="1" height="1" fill="#9aa4b4"/><rect x="4" y="140" width="1" height="1" fill="#9aa4b4"/><rect x="6" y="142" width="1" height="1" fill="#9aa4b4"/><rect x="4" y="144" width="1" height="1" fill="#9aa4b4"/><rect x="6" y="146" width="1" height="1" fill="#9aa4b4"/><rect x="4" y="148" width="1" height="1" fill="#9aa4b4"/><rect x="6" y="150" width="1" height="1" fill="#9aa4b4"/><rect x="4" y="152" width="1" height="1" fill="#9aa4b4"/><rect x="6" y="154" width="1" height="1" fill="#9aa4b4"/><rect x="4" y="156" width="1" height="1" fill="#9aa4b4"/><rect x="6" y="158" width="1" height="1" fill="#9aa4b4"/><rect x="4" y="160" width="1" height="1" fill="#9aa4b4"/><rect x="6" y="162" width="1" height="1" fill="#9aa4b4"/><rect x="4" y="164" width="1" height="1" fill="#9aa4b4"/><rect x="6" y="166" width="1" height="1" fill="#9aa4b4"/><rect x="4" y="168" width="1" height="1" fill="#9aa4b4"/><rect x="6" y="170" width="1" height="1" fill="#9aa4b4"/><rect x="4" y="172" width="1" height="1" fill="#9aa4b4"/><rect x="6" y="174" width="1" height="1" fill="#9aa4b4"/><rect x="4" y="176" width="1" height="1" fill="#9aa4b4"/><rect x="6" y="178" width="1" height="1" fill="#9aa4b4"/><rect x="4" y="180" width="1" height="1" fill="#9aa4b4"/><rect x="6" y="182" width="1" height="1" fill="#9aa4b4"/><rect x="4" y="184" width="1" height="1" fill="#9aa4b4"/><rect x="6" y="186" width="1" height="1" fill="#9aa4b4"/><rect x="4" y="188" width="1" height="1" fill="#9aa4b4"/><rect x="6" y="190" width="1" height="1" fill="#9aa4b4"/><rect x="4" y="192" width="1" height="1" fill="#9aa4b4"/><rect x="6" y="194" width="1" height="1" fill="#9aa4b4"/><rect x="4" y="196" width="1" height="1" fill="#9aa4b4"/><rect x="6" y="198" width="1" height="1" fill="#9aa4b4"/><rect x="4" y="200" width="1" height="1" fill="#9aa4b4"/><rect x="6" y="202" width="1" height="1" fill="#9aa4b4"/><rect x="4" y="204" width="1" height="1" fill="#9aa4b4"/><rect x="6" y="206" width="1" height="1" fill="#9aa4b4"/><rect x="4" y="208" width="1" height="1" fill="#9aa4b4"/><rect x="6" y="210" width="1" height="1" fill="#9aa4b4"/><rect x="4" y="212" width="1" height="1" fill="#9aa4b4"/><rect x="6" y="214" width="1" height="1" fill="#9aa4b4"/><rect x="4" y="216" width="1" height="1" fill="#9aa4b4"/><rect x="6" y="218" width="1" height="1" fill="#9aa4b4"/><rect x="4" y="220" width="1" height="1" fill="#9aa4b4"/><rect x="6" y="222" width="1" height="1" fill="#9aa4b4"/><rect x="4" y="224" width="1" height="1" fill="#9aa4b4"/><rect x="6" y="226" width="1" height="1" fill="#9aa4b4"/><rect x="4" y="228" width="1" height="1" fill="#9aa4b4"/><rect x="6" y="230" width="1" height="1" fill="#9aa4b4"/><rect x="4" y="232" width="1" height="1" fill="#9aa4b4"/><rect x="6" y="234" width="1" height="1" fill="#9aa4b4"/><rect x="4" y="236" width="1" height="1" fill="#9aa4b4"/><rect x="6" y="238" width="1" height="1" fill="#9aa4b4"/><rect x="4" y="240" width="1" height="1" fill="#9aa4b4"/><rect x="6" y="242" width="1" height="1" fill="#9aa4b4"/><rect x="4" y="244" width="1" height="1" fill="#9aa4b4"/><rect x="6" y="246" width="1" height="1" fill="#9aa4b4"/><rect x="4" y="248" width="1" height="1" fill="#9aa4b4"/><rect x="6" y="250" width="1" height="1" fill="#9aa4b4"/><rect x="4" y="252" width="1" height="1" fill="#9aa4b4"/><rect x="6" y="254" width="1" height="1" fill="#9aa4b4"/><rect x="4" y="256" width="1" height="1" fill="#9aa4b4"/><rect x="6" y="258" width="1" height="1" fill="#9aa4b4"/><rect x="4" y="260" width="1" height="1" fill="#9aa4b4"/><rect x="6" y="262" width="1" height="1" fill="#9aa4b4"/><rect x="4" y="264" width="1" height="1" fill="#9aa4b4"/><rect x="6" y="266" width="1" height="1" fill="#9aa4b4"/><rect x="4" y="268" width="1" height="1" fill="#9aa4b4"/><rect x="6" y="270" width="1" height="1" fill="#9aa4b4"/><rect x="4" y="272" width="1" height="1" fill="#9aa4b4"/><rect x="6" y="274" width="1" height="1" fill="#9aa4b4"/><rect x="4" y="276" width="1" height="1" fill="#9aa4b4"/><rect x="6" y="278" width="1" height="1" fill="#9aa4b4"/><rect x="4" y="280" width="1" height="1" fill="#9aa4b4"/><rect x="6" y="282" width="1" height="1" fill="#9aa4b4"/><rect x="4" y="284" width="1" height="1" fill="#9aa4b4"/><rect x="6" y="286" width="1" height="1" fill="#9aa4b4"/><rect x="4" y="288" width="1" height="1" fill="#9aa4b4"/><rect x="6" y="290" width="1" height="1" fill="#9aa4b4"/><rect x="4" y="292" width="1" height="1" fill="#9aa4b4"/><rect x="6" y="294" width="1" height="1" fill="#9aa4b4"/><rect x="4" y="296" width="1" height="1" fill="#9aa4b4"/><rect x="6" y="298" width="1" height="1" fill="#9aa4b4"/><rect x="4" y="300" width="1" height="1" fill="#9aa4b4"/><rect x="6" y="302" width="1" height="1" fill="#9aa4b4"/><rect x="4" y="304" width="1" height="1" fill="#9aa4b4"/><rect x="6" y="306" width="1" height="1" fill="#9aa4b4"/><rect x="4" y="308" width="1" height="1" fill="#9aa4b4"/><rect x="6" y="310" width="1" height="1" fill="#9aa4b4"/><rect x="4" y="312" width="1" height="1" fill="#9aa4b4"/><rect x="6" y="314" width="1" height="1" fill="#9aa4b4"/><rect x="4" y="316" width="1" height="1" fill="#9aa4b4"/><rect x="6" y="318" width="1" height="1" fill="#9aa4b4"/><rect x="4" y="320" width="1" height="1" fill="#9aa4b4"/><rect x="6" y="322" width="1" height="1" fill="#9aa4b4"/><rect x="4" y="324" width="1" height="1" fill="#9aa4b4"/><rect x="6" y="326" width="1" height="1" fill="#9aa4b4"/><rect x="4" y="328" width="1" height="1" fill="#9aa4b4"/><rect x="6" y="330" width="1" height="1" fill="#9aa4b4"/><rect x="4" y="332" width="1" height="1" fill="#9aa4b4"/><rect x="6" y="334" width="1" height="1" fill="#9aa4b4"/><rect x="4" y="336" width="1" height="1" fill="#9aa4b4"/><rect x="6" y="338" width="1" height="1" fill="#9aa4b4"/><rect x="4" y="340" width="1" height="1" fill="#9aa4b4"/><rect x="6" y="342" width="1" height="1" fill="#9aa4b4"/><rect x="4" y="344" width="1" height="1" fill="#9aa4b4"/><rect x="6" y="346" width="1" height="1" fill="#9aa4b4"/><rect x="4" y="348" width="1" height="1" fill="#9aa4b4"/><rect x="6" y="350" width="1" height="1" fill="#9aa4b4"/><rect x="4" y="352" width="1" height="1" fill="#9aa4b4"/><rect x="6" y="354" width="1" height="1" fill="#9aa4b4"/><rect x="4" y="356" width="1" height="1" fill="#9aa4b4"/><rect x="6" y="358" width="1" height="1" fill="#9aa4b4"/><rect x="4" y="360" width="1" height="1" fill="#9aa4b4"/><rect x="6" y="362" width="1" height="1" fill="#9aa4b4"/><rect x="4" y="364" width="1" height="1" fill="#9aa4b4"/><rect x="6" y="366" width="1" height="1" fill="#9aa4b4"/><rect x="4" y="368" width="1" height="1" fill="#9aa4b4"/><rect x="6" y="370" width="1" height="1" fill="#9aa4b4"/><rect x="4" y="372" width="1" height="1" fill="#9aa4b4"/><rect x="6" y="374" width="1" height="1" fill="#9aa4b4"/><rect x="4" y="376" width="1" height="1" fill="#9aa4b4"/><rect x="6" y="378" width="1" height="1" fill="#9aa4b4"/><rect x="4" y="380" width="1" height="1" fill="#9aa4b4"/><rect x="6" y="382" width="1" height="1" fill="#9aa4b4"/><rect x="4" y="384" width="1" height="1" fill="#9aa4b4"/><rect x="6" y="386" width="1" height="1" fill="#9aa4b4"/><rect x="4" y="388" width="1" height="1" fill="#9aa4b4"/><rect x="6" y="390" width="1" height="1" fill="#9aa4b4"/><rect x="4" y="392" width="1" height="1" fill="#9aa4b4"/><rect x="6" y="394" width="1" height="1" fill="#9aa4b4"/><rect x="4" y="396" width="1" height="1" fill="#9aa4b4"/><rect x="6" y="398" width="1" height="1" fill="#9aa4b4"/><rect x="4" y="400" width="1" height="1" fill="#9aa4b4"/><rect x="6" y="402" width="1" height="1" fill="#9aa4b4"/><rect x="4" y="404" width="1" height="1" fill="#9aa4b4"/><rect x="6" y="406" width="1" height="1" fill="#9aa4b4"/><rect x="4" y="408" width="1" height="1" fill="#9aa4b4"/><rect x="6" y="410" width="1" height="1" fill="#9aa4b4"/><rect x="4" y="412" width="1" height="1" fill="#9aa4b4"/><rect x="6" y="414" width="1" height="1" fill="#9aa4b4"/><rect x="4" y="416" width="1" height="1" fill="#9aa4b4"/><rect x="6" y="418" width="1" height="1" fill="#9aa4b4"/><rect x="4" y="420" width="1" height="1" fill="#9aa4b4"/><rect x="6" y="422" width="1" height="1" fill="#9aa4b4"/><rect x="4" y="424" width="1" height="1" fill="#9aa4b4"/><rect x="6" y="426" width="1" height="1" fill="#9aa4b4"/><rect x="4" y="428" width="1" height="1" fill="#9aa4b4"/><rect x="6" y="430" width="1" height="1" fill="#9aa4b4"/><rect x="4" y="432" width="1" height="1" fill="#9aa4b4"/><rect x="6" y="434" width="1" height="1" fill="#9aa4b4"/><rect x="4" y="436" width="1" height="1" fill="#9aa4b4"/><rect x="6" y="438" width="1" height="1" fill="#9aa4b4"/><rect x="4" y="440" width="1" height="1" fill="#9aa4b4"/><rect x="6" y="442" width="1" height="1" fill="#9aa4b4"/><rect x="4" y="444" width="1" height="1" fill="#9aa4b4"/><rect x="6" y="446" width="1" height="1" fill="#9aa4b4"/><rect x="4" y="448" width="1" height="1" fill="#9aa4b4"/><rect x="6" y="450" width="1" height="1" fill="#9aa4b4"/><rect x="4" y="452" width="1" height="1" fill="#9aa4b4"/><rect x="6" y="454" width="1" height="1" fill="#9aa4b4"/><rect x="4" y="456" width="1" height="1" fill="#9aa4b4"/><rect x="6" y="458" width="1" height="1" fill="#9aa4b4"/><rect x="4" y="460" width="1" height="1" fill="#9aa4b4"/><rect x="6" y="462" width="1" height="1" fill="#9aa4b4"/><rect x="4" y="464" width="1" height="1" fill="#9aa4b4"/><rect x="6" y="466" width="1" height="1" fill="#9aa4b4"/><rect x="4" y="468" width="1" height="1" fill="#9aa4b4"/><rect x="6" y="470" width="1" height="1" fill="#9aa4b4"/><rect x="4" y="472" width="1" height="1" fill="#9aa4b4"/><rect x="6" y="474" width="1" height="1" fill="#9aa4b4"/><rect x="4" y="476" width="1" height="1" fill="#9aa4b4"/><rect x="6" y="478" width="1" height="1" fill="#9aa4b4"/><rect x="4" y="480" width="1" height="1" fill="#9aa4b4"/><rect x="6" y="482" width="1" height="1" fill="#9aa4b4"/><rect x="4" y="484" width="1" height="1" fill="#9aa4b4"/><rect x="6" y="486" width="1" height="1" fill="#9aa4b4"/><rect x="4" y="488" width="1" height="1" fill="#9aa4b4"/><rect x="6" y="490" width="1" height="1" fill="#9aa4b4"/><rect x="4" y="492" width="1" height="1" fill="#9aa4b4"/><rect x="6" y="494" width="1" height="1" fill="#9aa4b4"/><rect x="4" y="496" width="1" height="1" fill="#9aa4b4"/><rect x="6" y="498" width="1" height="1" fill="#9aa4b4"/><rect x="4" y="500" width="1" height="1" fill="#9aa4b4"/><rect x="6" y="502" width="1" height="1" fill="#9aa4b4"/><rect x="4" y="504" width="1" height="1" fill="#9aa4b4"/><rect x="6" y="506" width="1" height="1" fill="#9aa4b4"/><rect x="4" y="508" width="1" height="1" fill="#9aa4b4"/><rect x="6" y="510" width="1" height="1" fill="#9aa4b4"/><rect x="4" y="512" width="1" height="1" fill="#9aa4b4"/><rect x="6" y="514" width="1" height="1" fill="#9aa4b4"/><rect x="4" y="516" width="1" height="1" fill="#9aa4b4"/><rect x="6" y="518" width="1" height="1" fill="#9aa4b4"/><rect x="4" y="520" width="1" height="1" fill="#9aa4b4"/><rect x="6" y="522" width="1" height="1" fill="#9aa4b4"/><rect x="4" y="524" width="1" height="1" fill="#9aa4b4"/><rect x="6" y="526" width="1" height="1" fill="#9aa4b4"/><rect x="4" y="528" width="1" height="1" fill="#9aa4b4"/><rect x="6" y="530" width="1" height="1" fill="#9aa4b4"/><rect x="4" y="532" width="1" height="1" fill="#9aa4b4"/><rect x="6" y="534" width="1" height="1" fill="#9aa4b4"/><rect x="4" y="536" width="1" height="1" fill="#9aa4b4"/><rect x="6" y="538" width="1" height="1" fill="#9aa4b4"/><rect x="4" y="540" width="1" height="1" fill="#9aa4b4"/><rect x="6" y="542" width="1" height="1" fill="#9aa4b4"/><rect x="4" y="544" width="1" height="1" fill="#9aa4b4"/><rect x="6" y="546" width="1" height="1" fill="#9aa4b4"/><rect x="4" y="548" width="1" height="1" fill="#9aa4b4"/><rect x="6" y="550" width="1" height="1" fill="#9aa4b4"/><rect x="4" y="552" width="1" height="1" fill="#9aa4b4"/><rect x="6" y="554" width="1" height="1" fill="#9aa4b4"/><rect x="4" y="556" width="1" height="1" fill="#9aa4b4"/><rect x="6" y="558" width="1" height="1" fill="#9aa4b4"/><rect x="4" y="560" width="1" height="1" fill="#9aa4b4"/><rect x="6" y="562" width="1" height="1" fill="#9aa4b4"/><rect x="4" y="564" width="1" height="1" fill="#9aa4b4"/><rect x="6" y="566" width="1" height="1" fill="#9aa4b4"/><rect x="4" y="568" width="1" height="1" fill="#9aa4b4"/><rect x="6" y="570" width="1" height="1" fill="#9aa4b4"/><rect x="4" y="572" width="1" height="1" fill="#9aa4b4"/><rect x="6" y="574" width="1" height="1" fill="#9aa4b4"/><rect x="4" y="576" width="1" height="1" fill="#9aa4b4"/><rect x="6" y="578" width="1" height="1" fill="#9aa4b4"/><rect x="4" y="580" width="1" height="1" fill="#9aa4b4"/><rect x="6" y="582" width="1" height="1" fill="#9aa4b4"/><rect x="4" y="584" width="1" height="1" fill="#9aa4b4"/><rect x="6" y="586" width="1" height="1" fill="#9aa4b4"/><rect x="4" y="588" width="1" height="1" fill="#9aa4b4"/><rect x="6" y="590" width="1" height="1" fill="#9aa4b4"/><rect x="4" y="592" width="1" height="1" fill="#9aa4b4"/><rect x="6" y="594" width="1" height="1" fill="#9aa4b4"/><rect x="4" y="596" width="1" height="1" fill="#9aa4b4"/><rect x="6" y="598" width="1" height="1" fill="#9aa4b4"/><rect x="4" y="600" width="1" height="1" fill="#9aa4b4"/><rect x="6" y="602" width="1" height="1" fill="#9aa4b4"/><rect x="4" y="604" width="1" height="1" fill="#9aa4b4"/><rect x="6" y="606" width="1" height="1" fill="#9aa4b4"/><rect x="4" y="608" width="1" height="1" fill="#9aa4b4"/><rect x="6" y="610" width="1" height="1" fill="#9aa4b4"/><rect x="4" y="612" width="1" height="1" fill="#9aa4b4"/><rect x="6" y="614" width="1" height="1" fill="#9aa4b4"/><rect x="4" y="616" width="1" height="1" fill="#9aa4b4"/><rect x="6" y="618" width="1" height="1" fill="#9aa4b4"/><rect x="4" y="620" width="1" height="1" fill="#9aa4b4"/><rect x="6" y="622" width="1" height="1" fill="#9aa4b4"/><rect x="4" y="624" width="1" height="1" fill="#9aa4b4"/><rect x="6" y="626" width="1" height="1" fill="#9aa4b4"/><rect x="4" y="628" width="1" height="1" fill="#9aa4b4"/><rect x="6" y="630" width="1" height="1" fill="#9aa4b4"/><rect x="4" y="632" width="1" height="1" fill="#9aa4b4"/><rect x="6" y="634" width="1" height="1" fill="#9aa4b4"/><rect x="4" y="636" width="1" height="1" fill="#9aa4b4"/><rect x="6" y="638" width="1" height="1" fill="#9aa4b4"/><rect x="4" y="640" width="1" height="1" fill="#9aa4b4"/><rect x="6" y="642" width="1" height="1" fill="#9aa4b4"/><rect x="4" y="644" width="1" height="1" fill="#9aa4b4"/><rect x="6" y="646" width="1" height="1" fill="#9aa4b4"/><rect x="4" y="648" width="1" height="1" fill="#9aa4b4"/><rect x="6" y="650" width="1" height="1" fill="#9aa4b4"/><rect x="4" y="652" width="1" height="1" fill="#9aa4b4"/><rect x="6" y="654" width="1" height="1" fill="#9aa4b4"/><rect x="4" y="656" width="1" height="1" fill="#9aa4b4"/><rect x="6" y="658" width="1" height="1" fill="#9aa4b4"/><rect x="4" y="660" width="1" height="1" fill="#9aa4b4"/><rect x="6" y="662" width="1" height="1" fill="#9aa4b4"/><rect x="4" y="664" width="1" height="1" fill="#9aa4b4"/><rect x="6" y="666" width="1" height="1" fill="#9aa4b4"/><rect x="4" y="668" width="1" height="1" fill="#9aa4b4"/><rect x="6" y="670" width="1" height="1" fill="#9aa4b4"/><rect x="4" y="672" width="1" height="1" fill="#9aa4b4"/><rect x="6" y="674" width="1" height="1" fill="#9aa4b4"/><rect x="4" y="676" width="1" height="1" fill="#9aa4b4"/><rect x="6" y="678" width="1" height="1" fill="#9aa4b4"/></svg>
<div class="a" style="left:183px;top:107px;width:1px;height:573px;background:#6b7a8c"></div>
<div class="t" style="left:186.45px;top:109.84px;font-size:12px;font-weight:bold;color:#444;letter-spacing:0.585px;font-family:'Liberation Sans',sans-serif;transform:scaleX(1.0936);transform-origin:0 0;">Grafik</div>
<div class="a" style="left:184px;top:123px;width:656px;height:1px;background:#5a5a5a"></div>
<div class="a" style="left:184px;top:124px;width:656px;height:26px;background:linear-gradient(#fdfdfd,#eeeeee 40%,#dcdcdc)"></div>
<div class="a" style="left:184px;top:150px;width:656px;height:1px;background:#5c5c5c"></div>
<svg class="a" style="left:184px;top:124px" width="300" height="26" viewBox="184 124 300 26"><rect x="188.5" y="125.5" width="26" height="20" fill="#ececec" stroke="#a2a2a2"/><path d="M189 126.5 H214" stroke="#fff"/><rect x="194" y="127.5" width="16" height="16" fill="#fff"/><path d="M197.4 127.7 V143.5 M194 140.4 H210" stroke="#000" stroke-width="1.5"/><rect x="216.5" y="125.5" width="26" height="20" fill="#e9ecef" stroke="#7d92a8"/><rect x="221" y="127.5" width="17" height="16.5" fill="#fff"/><path d="M228.6 128 V144 M232.6 128 V144 M236.6 128 V144 M222 129.4 H238 M222 133.5 H238 M222 137.5 H238" stroke="#888" stroke-width="1"/><path d="M224.6 128 V144 M222 141.4 H238" stroke="#000" stroke-width="1.5"/><rect x="244.5" y="125.5" width="42" height="20" fill="#ececec" stroke="#8e8e8e"/><path d="M245 126.5 H286" stroke="#fff"/><rect x="250" y="128" width="16" height="16" fill="#fff"/><path d="M262 133 H257.5 A3.1 3.1 0 0 0 257.5 139.4 H262" fill="none" stroke="#e8303a" stroke-width="2.8"/><path d="M270.9 134 H277.1 L274 137.9 Z" fill="#000"/><rect x="288.5" y="125.5" width="46" height="20" fill="#ececec" stroke="#7d92a8"/><rect x="294.6" y="128" width="18.6" height="15.6" fill="#000"/><path d="M319 133.4 H325.4 L322.2 137.4 Z" fill="#000"/><rect x="336.5" y="125.5" width="106" height="20" fill="#ececec" stroke="#7d92a8"/><path d="M346.5 136 H419" stroke="#000" stroke-width="2.2" stroke-linecap="round"/><path d="M426.8 133.4 H433.2 L430 137.4 Z" fill="#000"/></svg>
<svg class="a" style="left:184px;top:151px" width="656" height="529" viewBox="184 151 656 529"><rect x="184" y="151" width="656" height="529" fill="#fff"/><g stroke="#c0c0c0" stroke-width="1" stroke-dasharray="6 3" shape-rendering="crispEdges"><line x1="199.25" y1="151" x2="199.25" y2="680"/><line x1="249.25" y1="151" x2="249.25" y2="680"/><line x1="299.25" y1="151" x2="299.25" y2="680"/><line x1="349.25" y1="151" x2="349.25" y2="680"/><line x1="399.25" y1="151" x2="399.25" y2="680"/><line x1="449.25" y1="151" x2="449.25" y2="680"/><line x1="499.25" y1="151" x2="499.25" y2="680"/><line x1="549.25" y1="151" x2="549.25" y2="680"/><line x1="599.25" y1="151" x2="599.25" y2="680"/><line x1="649.25" y1="151" x2="649.25" y2="680"/><line x1="699.25" y1="151" x2="699.25" y2="680"/><line x1="749.25" y1="151" x2="749.25" y2="680"/><line x1="799.25" y1="151" x2="799.25" y2="680"/><line x1="184" y1="666.25" x2="840" y2="666.25"/><line x1="184" y1="616.25" x2="840" y2="616.25"/><line x1="184" y1="566.25" x2="840" y2="566.25"/><line x1="184" y1="516.25" x2="840" y2="516.25"/><line x1="184" y1="466.25" x2="840" y2="466.25"/><line x1="184" y1="416.25" x2="840" y2="416.25"/><line x1="184" y1="366.25" x2="840" y2="366.25"/><line x1="184" y1="316.25" x2="840" y2="316.25"/><line x1="184" y1="266.25" x2="840" y2="266.25"/><line x1="184" y1="216.25" x2="840" y2="216.25"/><line x1="184" y1="166.25" x2="840" y2="166.25"/></g><polygon points="449.25,516.25 699.25,516.25 745.64,219.86" fill="rgba(153,51,0,0.1)"/><path d="M449.25,516.25 L479.25,516.25 A30,30 0 0 0 470.46,495.04 Z" fill="rgba(0,100,0,0.1)"/><path d="M479.25,516.25 A30,30 0 0 0 470.46,495.04" fill="none" stroke="#006400" stroke-width="1.2"/><line x1="-272.53" y1="2222.63" x2="1540.19" y2="-1343.04" stroke="#111" stroke-width="1.3"/><line x1="-1037.20" y1="-686.50" x2="2528.48" y2="1126.22" stroke="#111" stroke-width="1.3"/><line x1="-666.45" y1="-1079.84" x2="1934.11" y2="1959.42" stroke="#111" stroke-width="1.3"/><line x1="2218.88" y1="-784.03" x2="-820.38" y2="1816.53" stroke="#111" stroke-width="1.3"/><line x1="-1342.11" y1="130.52" x2="2609.77" y2="749.07" stroke="#111" stroke-width="2.1"/><path d="M449.25,516.25 L745.64,219.86 L699.25,516.25" fill="none" stroke="#bd300a" stroke-width="1.5" stroke-linejoin="round"/><path d="M449.25,516.5 L699.25,516.5" fill="none" stroke="#993300" stroke-width="1.4"/><circle cx="449.25" cy="516.25" r="3.2" fill="#0000ff" stroke="#000" stroke-width="1"/><circle cx="699.25" cy="516.25" r="3.2" fill="#7f7fff" stroke="#000" stroke-width="1"/><circle cx="745.64" cy="219.86" r="3.2" fill="#404040" stroke="#000" stroke-width="1"/><circle cx="633.83" cy="439.79" r="3.2" fill="#404040" stroke="#000" stroke-width="1"/></svg>
<div class="t" style="left:420.00px;top:518.74px;font-size:12px;font-weight:normal;color:#0000ff;letter-spacing:0.000px;font-family:'Liberation Sans',sans-serif;">A</div>
<div class="t" style="left:708.00px;top:520.54px;font-size:12px;font-weight:normal;color:#7f7fff;letter-spacing:0.000px;font-family:'Liberation Sans',sans-serif;">B</div>
<div class="t" style="left:734.80px;top:197.44px;font-size:12px;font-weight:normal;color:#404040;letter-spacing:0.000px;font-family:'Liberation Sans',sans-serif;">D</div>
<div class="t" style="left:638.00px;top:423.59px;font-size:12px;font-weight:normal;color:#404040;letter-spacing:0.000px;font-family:'Liberation Sans',sans-serif;">E</div>
<div class="t" style="left:740.16px;top:369.64px;font-size:12px;font-weight:normal;color:#ff0000;letter-spacing:0.521px;font-family:'Liberation Sans',sans-serif;transform:scaleX(1.0798);transform-origin:0 0;">a <span style="display:inline-block;transform:scaleX(1.3);margin:0 1.05px">=</span> 6</div>
<div class="t" style="left:574.37px;top:521.24px;font-size:12px;font-weight:normal;color:#ff0000;letter-spacing:0.456px;font-family:'Liberation Sans',sans-serif;transform:scaleX(1.0691);transform-origin:0 0;">d <span style="display:inline-block;transform:scaleX(1.3);margin:0 1.05px">=</span> 5</div>
<div class="t" style="left:480.05px;top:495.54px;font-size:12px;font-weight:normal;color:#006400;letter-spacing:0.599px;font-family:'Liberation Sans',sans-serif;transform:scaleX(1.0995);transform-origin:0 0;">α <span style="display:inline-block;transform:scaleX(1.3);margin:0 1.05px">=</span> 45°</div>
</body></html>
